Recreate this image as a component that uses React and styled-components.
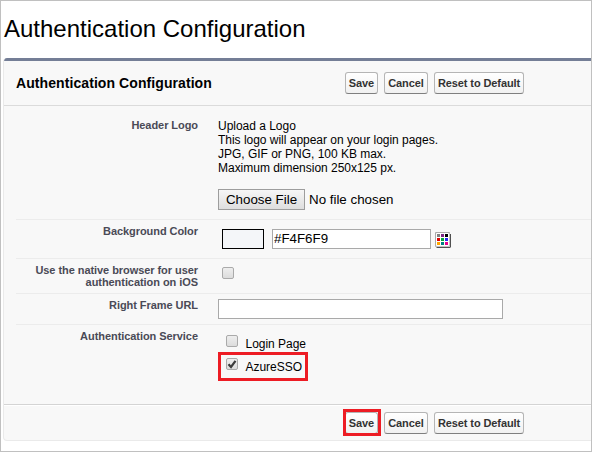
import React from "react";
import styled, { createGlobalStyle } from "styled-components";

const Global = createGlobalStyle`
  * { box-sizing: border-box; }
  body { margin: 0; background: #fff; font-family: "Liberation Sans", Arial, sans-serif; color: #000; }
`;

const Page = styled.main`
  width: 592px;
  height: 452px;
  border: 1px solid #c0c0c0;
  background: #fff;
  padding: 13px 0 0 2px;
  overflow: hidden;
`;

const Title = styled.h1`
  margin: 0 0 14px 1px;
  height: 30px;
  line-height: 30px;
  font-size: 24px;
  font-weight: 400;
  white-space: nowrap;
`;

const Panel = styled.section`
  height: 383px;
  background: #f8f8f8;
  border: solid #eaeaea;
  border-width: 0 0 1px 1px;
  border-radius: 4px 0 0 4px;
  overflow: hidden;
`;

const Accent = styled.div`
  height: 3px;
  background: #747e96;
`;

const Header = styled.header`
  display: flex;
  height: 45px;
  padding: 11px 0 0 12px;
  border-bottom: 1px solid #dbdbdb;
`;

const Heading = styled.h2`
  margin: 0;
  width: 329px;
  line-height: 22px;
  font-size: 14px;
  font-weight: 700;
  letter-spacing: 0.08px;
  white-space: nowrap;
`;

const Footer = styled.footer`
  height: 36px;
  padding: 7px 0 0 341px;
  border-top: 1px solid #d4d4d4;
  box-shadow: inset 0 1px #fff;
`;

const Actions = styled.div`
  display: flex;
  gap: 6px;
`;

const Action = styled.button`
  position: relative;
  width: ${(p) => p.$w}px;
  height: 22px;
  padding: 0;
  border: 1px solid #b5b5b5;
  border-bottom-color: #7f7f7f;
  border-radius: 3px;
  background: linear-gradient(#fff, #f1f1f1);
  color: #333;
  font: 700 11px/20px "Liberation Sans", Arial, sans-serif;
  letter-spacing: -0.1px;
  white-space: nowrap;
`;

const MarkedAction = styled(Action)`
  &::after {
    content: "";
    position: absolute;
    inset: -4px -4px -3px -3px;
    border: 3px solid #ed1c24;
  }
`;

const Row = styled.div`
  display: flex;
  height: ${(p) => p.$h}px;
  margin-left: 12px;
  border-bottom: ${(p) => (p.$last ? "none" : "1px solid #ececec")};
`;

const Label = styled.div`
  width: 182px;
  margin-right: 20px;
  padding-top: ${(p) => p.$top}px;
  color: #4a4a56;
  font-size: 11px;
  font-weight: 700;
  letter-spacing: -0.06px;
  line-height: 12px;
  text-align: right;
  white-space: nowrap;
`;

const Value = styled.div`
  display: flex;
  align-items: flex-start;
  padding: ${(p) => p.$pad};
`;

const Stack = styled(Value)`
  flex-direction: column;
`;

const Line = styled.div`
  font-size: 12px;
  line-height: 14px;
  letter-spacing: -0.02px;
  white-space: nowrap;
`;

const FilePicker = styled.div`
  display: flex;
  gap: 4px;
  margin-top: 14px;
  font-size: 13.33px;
  line-height: 21px;
  white-space: nowrap;
`;

const FileButton = styled.button`
  width: 87px;
  height: 21px;
  padding: 0;
  border: 1px solid #9d9d9d;
  background: linear-gradient(#f6f6f6, #dedede);
  color: #000;
  font: 13.33px/19px "Liberation Sans", Arial, sans-serif;
  white-space: nowrap;
`;

const Swatch = styled.div`
  width: 42px;
  height: 20px;
  margin-right: 8px;
  border: 1px solid #000;
  background: #f4f6f9;
`;

const Input = styled.input`
  width: ${(p) => p.$w}px;
  height: 20px;
  padding: 0 1px 2px;
  border: 1px solid #a9a9a9;
  border-radius: 0;
  background: #fff;
  color: #000;
  font: 13.33px "Liberation Sans", Arial, sans-serif;
  outline: none;
`;

const Palette = styled.svg`
  margin: 3px 0 0 4px;
`;

const Box = styled.span`
  display: block;
  flex: none;
  width: 12px;
  height: 12px;
  border: 1px solid #aaa;
  border-radius: 2px;
  background: linear-gradient(#eee, #dcdcdc);
  svg { display: block; }
`;

const Option = styled.div`
  display: flex;
  gap: 7.5px;
  width: 90px;
  height: ${(p) => (p.$marked ? 29 : 17)}px;
  padding: ${(p) => (p.$marked ? "3px 0 0 5px" : "0 0 0 8px")};
  border: ${(p) => (p.$marked ? "3px solid #ed1c24" : "none")};
  ${Line} { margin-top: 2px; }
`;

const colours = ["#808080", "#7b2382", "#000", "#e00000", "#00a83c", "#2b2bf0", "#ffa500", "#008080", "#e6008c"];

function PaletteIcon() {
  return (
    <Palette width="16" height="16">
      <path d="M1 2h15v13l-1 1H2l-1-1z" fill="#505050" />
      <rect width="15" height="15" rx="1" fill="#aaa" />
      <rect x="1" y="1" width="14" height="14" fill="#c4c4c4" />
      <rect x="1" y="1" width="13" height="13" rx="1" fill="#fff" />
      {colours.map((c, i) => (
        <rect key={c} x={2 + (i % 3) * 4} y={2 + Math.floor(i / 3) * 4} width="3" height="3" fill={c} />
      ))}
    </Palette>
  );
}

function Buttons({ marked }) {
  const Save = marked ? MarkedAction : Action;
  return (
    <Actions>
      <Save $w={33}>Save</Save>
      <Action $w={44}>Cancel</Action>
      <Action $w={90}>Reset to Default</Action>
    </Actions>
  );
}

export default function App() {
  return (
    <Page>
      <Global />
      <Title>Authentication Configuration</Title>
      <Panel>
        <Accent />
        <Header>
          <Heading>Authentication Configuration</Heading>
          <Buttons />
        </Header>
        <Row $h={114}>
          <Label $top={13}>Header Logo</Label>
          <Stack $pad="13px 0 0">
            <Line>Upload a Logo</Line>
            <Line>This logo will appear on your login pages.</Line>
            <Line>JPG, GIF or PNG, 100 KB max.</Line>
            <Line>Maximum dimension 250x125 px.</Line>
            <FilePicker>
              <FileButton>Choose File</FileButton>
              <span>No file chosen</span>
            </FilePicker>
          </Stack>
        </Row>
        <Row $h={39}>
          <Label $top={5}>Background Color</Label>
          <Value $pad="9px 0 0 4px">
            <Swatch />
            <Input $w={159} defaultValue="#F4F6F9" />
            <PaletteIcon />
          </Value>
        </Row>
        <Row $h={35}>
          <Label $top={5}>Use the native browser for user<br />authentication on iOS</Label>
          <Value $pad="8px 0 0 4px"><Box /></Value>
        </Row>
        <Row $h={31}>
          <Label $top={5}>Right Frame URL</Label>
          <Value $pad="5px 0 0"><Input $w={285} /></Value>
        </Row>
        <Row $h={79} $last>
          <Label $top={5}>Authentication Service</Label>
          <Stack $pad="10px 0 0">
            <Option><Box /><Line>Login Page</Line></Option>
            <Option $marked>
              <Box>
                <svg width="10" height="10" viewBox="0 0 10 10"><path d="M1.5 5.3 4 8 8.5 1.8" fill="none" stroke="#3c3c3c" strokeWidth="2.2" /></svg>
              </Box>
              <Line>AzureSSO</Line>
            </Option>
          </Stack>
        </Row>
        <Footer><Buttons marked /></Footer>
      </Panel>
    </Page>
  );
}
